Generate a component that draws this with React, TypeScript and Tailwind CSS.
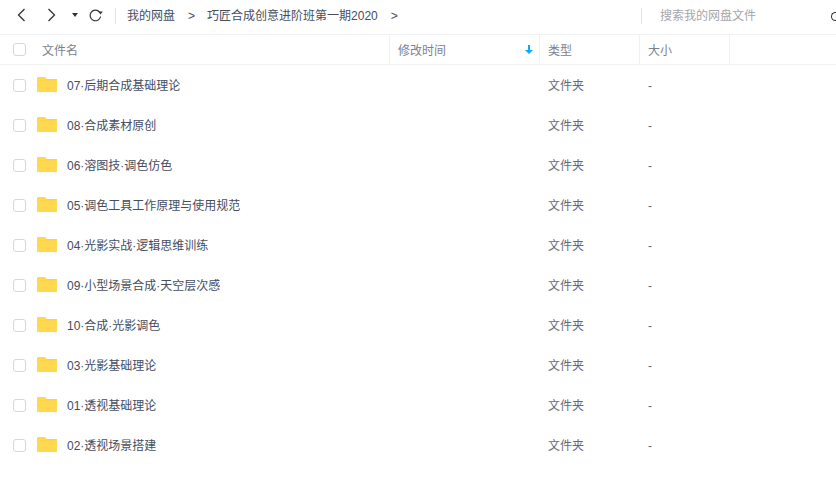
const rows = [
  "07·后期合成基础理论",
  "08·合成素材原创",
  "06·溶图技·调色仿色",
  "05·调色工具工作原理与使用规范",
  "04·光影实战·逻辑思维训练",
  "09·小型场景合成·天空层次感",
  "10·合成·光影调色",
  "03·光影基础理论",
  "01·透视基础理论",
  "02·透视场景搭建",
];

function Check() {
  return <span className="block h-[13px] w-[13px] rounded-[3px] border border-[#d4d7dc] bg-white" />;
}

function Folder() {
  return (
    <svg className="block" width="20" height="15" viewBox="0 0 20 15">
      <path d="M0 1C0 .4.4 0 1 0h7l2 2h9c.6 0 1 .4 1 1v11c0 .6-.4 1-1 1H1c-.6 0-1-.4-1-1Z" fill="#ffd84f" />
      <path d="M0 3h9l1-1h9c.6 0 1 .4 1 1v.6H0Z" fill="#ffcf3e" />
    </svg>
  );
}

export default function App() {
  return (
    <div className="h-[494px] w-[836px] overflow-hidden bg-white text-[12px] font-['Liberation_Sans','Noto_Sans_CJK_SC',sans-serif]">
      <div className="flex h-[34px] items-center pb-[2px]">
        <div className="mb-[2px] flex w-[115px] shrink-0 items-center">
          <svg className="ml-[16px]" width="10" height="14" viewBox="0 0 10 14" fill="none" stroke="#333" strokeWidth="1.3"><path d="M8.5 1 2.5 7l6 6" /></svg>
          <svg className="ml-[21px]" width="10" height="14" viewBox="0 0 10 14" fill="none" stroke="#333" strokeWidth="1.3"><path d="m1.5 1 6 6-6 6" /></svg>
          <svg className="ml-[15px]" width="6" height="4" viewBox="0 0 6 4" fill="#333"><path d="M0 0h6L3 4Z" /></svg>
          <svg className="ml-[10px]" width="15" height="15" viewBox="0 0 15 15" fill="none" stroke="#333" strokeWidth="1.2"><path d="M11.6 4.2A5.3 5.3 0 1 0 12.6 8.5" /><path d="M10.2 6.5h4.6L12.5 3.6Z" fill="#333" stroke="none" transform="rotate(180 12.5 5)" /></svg>
        </div>
        <div className="h-[16px] w-px bg-[#e2e4e8]" />
        <div className="ml-[11px] flex items-center text-[#454d5e]">
          <span>我的网盘</span>
          <span className="ml-[13px]">&gt;</span>
          <span className="ml-[12px]">巧匠合成创意进阶班第一期2020</span>
          <span className="ml-[13px]">&gt;</span>
        </div>
        <div className="ml-auto flex items-center">
          <div className="h-[16px] w-px bg-[#e2e4e8]" />
          <span className="ml-[18px] w-[171px] text-[#a3a6ad]">搜索我的网盘文件</span>
          <span className="block h-[9px] w-[5px] rounded-l-full border-y border-l border-[#333]" />
        </div>
      </div>

      <div className="flex h-[31px] items-stretch border-y border-[#f0f1f4] text-[#7c8190]">
        <div className="flex w-[390px] items-center border-r border-[#f0f1f4] pl-[13px]">
          <Check />
          <span className="ml-[16px] pt-[2px]">文件名</span>
        </div>
        <div className="flex w-[150px] items-center justify-between border-r border-[#f0f1f4] pl-[8px] pr-[6px]">
          <span className="pt-[2px]">修改时间</span>
          <svg width="8" height="9" viewBox="0 0 8 9" fill="#09aaff"><path d="M3 0h2v5h3L4 9 0 5h3Z" /></svg>
        </div>
        <div className="flex w-[100px] items-center border-r border-[#f0f1f4] pl-[8px] pt-[2px]">类型</div>
        <div className="flex w-[90px] items-center border-r border-[#f0f1f4] pl-[8px] pt-[2px]">大小</div>
      </div>

      <div>
        {rows.map((name) => (
          <div key={name} className="flex h-[40px] items-center">
            <div className="flex w-[540px] items-center pl-[13px]">
              <Check />
              <span className="mb-[2px] ml-[11px]"><Folder /></span>
              <span className="ml-[10px] pt-[2px] text-[#454d5e]">{name}</span>
            </div>
            <div className="w-[100px] pl-[8px] pt-[2px] text-[#666a75]">文件夹</div>
            <div className="pl-[8px] pt-[2px] text-[#666a75]">-</div>
          </div>
        ))}
      </div>
    </div>
  );
}
